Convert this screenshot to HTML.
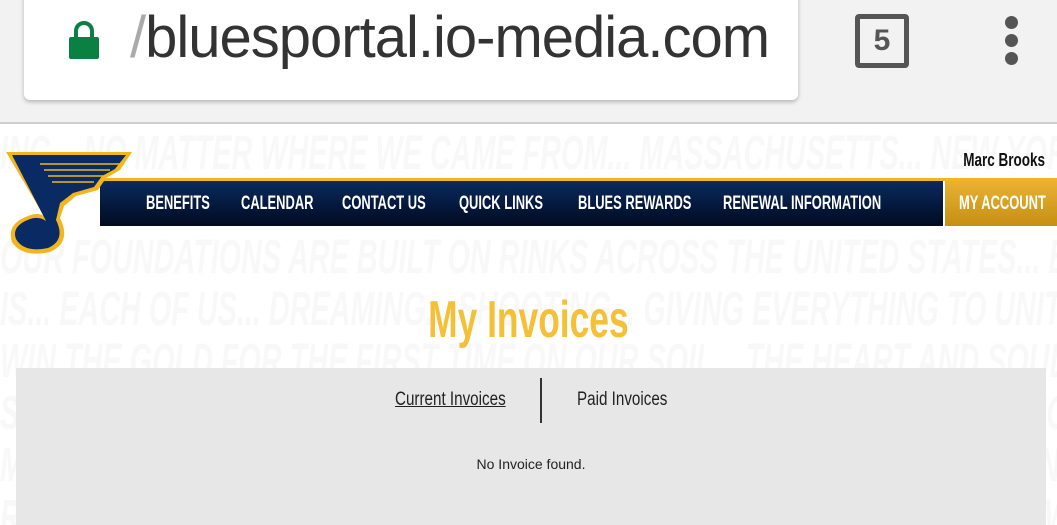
<!DOCTYPE html>
<html><head><meta charset="utf-8"><style>
*{margin:0;padding:0;box-sizing:border-box}
body{width:1057px;height:525px;overflow:hidden;background:#fff;font-family:"Liberation Sans",sans-serif;position:relative}
.chrome{position:absolute;left:0;top:0;width:1057px;height:124px;background:#f2f2f2;border-bottom:2px solid #cfcfcf;z-index:3}
.url{position:absolute;left:24px;top:-10px;width:774px;height:110px;background:#fff;border-radius:6px;box-shadow:0 2px 4px rgba(0,0,0,.25)}
.urltext{position:absolute;left:106px;top:14px;font-size:58px;color:#333;letter-spacing:-1px;transform:scaleX(1.0);transform-origin:left;white-space:nowrap}
.bgwrap{position:absolute;left:0;top:126px;width:1057px;height:399px;overflow:hidden}
.bg{position:absolute;left:0;top:2px;color:#f8f8f8;font-size:48px;font-weight:bold;font-style:italic;white-space:nowrap;line-height:52px;transform:scaleX(.6);transform-origin:left;width:1900px}
.nav{position:absolute;left:100px;top:178px;width:957px;height:48px;background:linear-gradient(#0b2a5e,#04173a 60%,#010b1f);border-top:3px solid #f3b51d;z-index:2}
.nav span{position:absolute;top:12px;color:#fff;font-size:19px;font-weight:bold;display:inline-block;transform:scaleX(.68);transform-origin:left;white-space:nowrap}
.acct{position:absolute;left:943px;top:181px;width:114px;height:45px;background:linear-gradient(#e9b233,#c58f14);border-left:2px solid #fff;z-index:2}
.acct span{position:absolute;left:14px;top:12px;color:#fff;font-size:19px;font-weight:bold;display:inline-block;transform:scaleX(.68);transform-origin:left;white-space:nowrap}
.box{position:absolute;left:16px;top:368px;width:1030px;height:157px;background:rgba(230,230,230,.95);z-index:2}
</style></head><body>
<div class="bgwrap"><div class="bg">
<div>ING... NO MATTER WHERE WE CAME FROM... MASSACHUSETTS... NEW YORK... MINNESOTA</div>
<div>&nbsp;</div>
<div>OUR FOUNDATIONS ARE BUILT ON RINKS ACROSS THE UNITED STATES... BUT ROOTED</div>
<div>IS... EACH OF US... DREAMING... SHOOTING... GIVING EVERYTHING TO UNITE UNDER</div>
<div>WIN THE GOLD FOR THE FIRST TIME ON OUR SOIL... THE HEART AND SOUL OF HOCKEY</div>
<div>STAND AND CHEER! LEAVE NO DOUBT... THIS IS OUR GAME. THAT HOME ICE IS</div>
<div>MATTER WHERE WE CAME FROM... MASSACHUSETTS... NEW YORK... MINNESOTA... OR</div>
<div>RINK... THE THRILL OF A FRESH SHEET... THE SNIG ETCH OF YOUR BOOT WHEN YOU</div>
</div></div>
<div class="chrome">
 <div class="url">
  <svg style="position:absolute;left:43px;top:30px" width="34" height="40" viewBox="0 0 34 40"><path d="M9 18V11a8 8 0 0 1 16 0v7" fill="none" stroke="#0b8043" stroke-width="4"/><rect x="2" y="17" width="30" height="22" rx="2" fill="#0b8043"/></svg>
  <div class="urltext"><span style="color:#aaa">/</span>bluesportal.io-media.com</div>
 </div>
 <div style="position:absolute;left:855px;top:14px;width:54px;height:54px;border:5px solid #555;border-radius:4px;text-align:center;font-weight:bold;font-size:30px;line-height:44px;color:#555">5</div>
 <div style="position:absolute;left:1005px;top:16px;width:13px;height:13px;border-radius:50%;background:#555"></div>
 <div style="position:absolute;left:1005px;top:34px;width:13px;height:13px;border-radius:50%;background:#555"></div>
 <div style="position:absolute;left:1005px;top:52px;width:13px;height:13px;border-radius:50%;background:#555"></div>
</div>
<div style="position:absolute;right:12px;top:150px;font-size:18px;font-weight:bold;color:#111;transform:scaleX(.75);transform-origin:right;z-index:2">Marc Brooks</div>
<div class="nav">
 <span style="left:46px">BENEFITS</span>
 <span style="left:141px">CALENDAR</span>
 <span style="left:242px">CONTACT US</span>
 <span style="left:359px">QUICK LINKS</span>
 <span style="left:478px">BLUES REWARDS</span>
 <span style="left:623px">RENEWAL INFORMATION</span>
</div>
<div class="acct"><span>MY ACCOUNT</span></div>
<svg style="position:absolute;left:2px;top:150px;z-index:3" width="132" height="106" viewBox="0 0 132 106">
 <path d="M4 2 H130 L118 20 L104 28 L96 40 L74 46 L62 56 L58 68 Q70 92 48 102 Q20 108 10 92 Q4 74 26 66 Q36 62 42 66 Z" fill="#f3b51d"/>
 <path d="M10 5 H124 L113 19 L100 26 L92 37 L71 43 L58 53 L54 70 Q64 90 46 98 Q22 103 14 89 Q9 76 28 69 Q37 66 44 71 Z" fill="#0a2a63"/>
 <path d="M38 14 H118 M42 20 H108 M46 26 H102 M50 32 H92" stroke="#f3b51d" stroke-width="1.5"/>
</svg>
<div style="position:absolute;left:0;width:1057px;top:290px;text-align:center;font-size:52px;font-weight:bold;color:#f3c037;z-index:2"><span style="display:inline-block;transform:scaleX(.68)">My Invoices</span></div>
<div class="box">
 <div style="position:absolute;left:379px;top:21px;font-size:19px;color:#222;text-decoration:underline;transform:scaleX(.8);transform-origin:left">Current Invoices</div>
 <div style="position:absolute;left:524px;top:10px;width:2px;height:45px;background:#333"></div>
 <div style="position:absolute;left:561px;top:21px;font-size:19px;color:#222;transform:scaleX(.8);transform-origin:left">Paid Invoices</div>
 <div style="position:absolute;left:0;width:1030px;top:88px;text-align:center;font-size:14px;color:#222">No Invoice found.</div>
</div>
</body></html>
